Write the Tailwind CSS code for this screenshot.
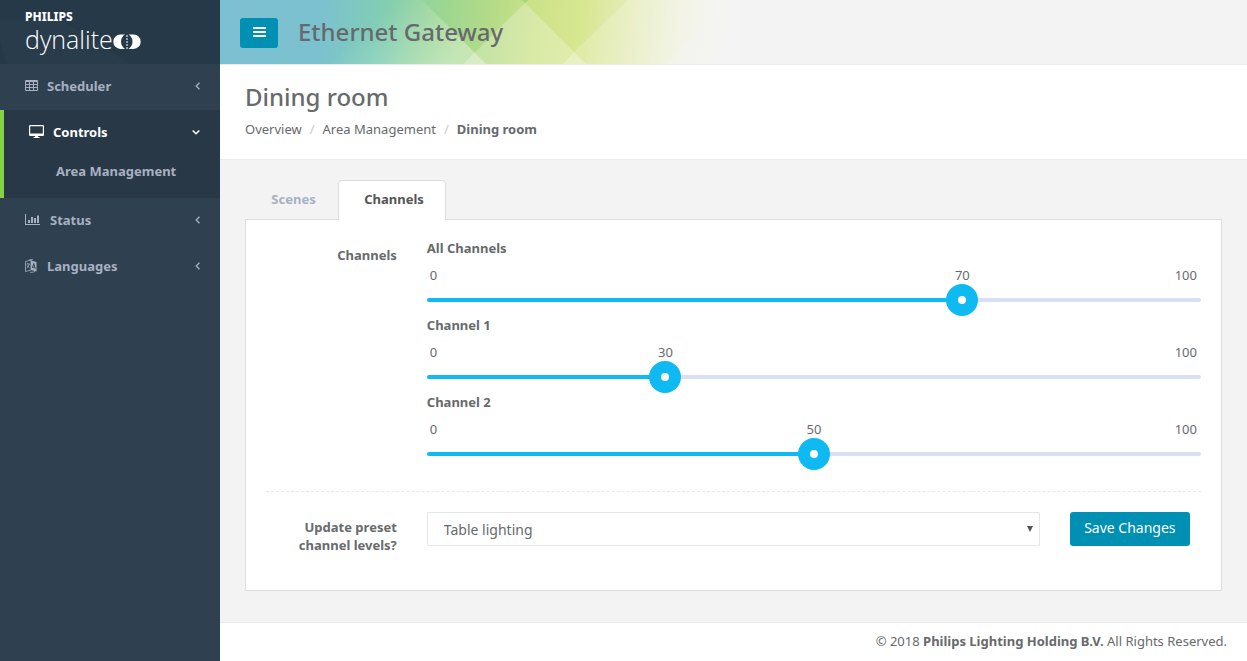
<!DOCTYPE html>
<html lang="en">
<head>
    <meta charset="UTF-8">
    <meta name="viewport" content="width=device-width, initial-scale=1.0">
    <title>Ethernet Gateway - Dining room</title>
    <script src="https://cdn.jsdelivr.net/npm/@tailwindcss/browser@4"></script>
</head>
<body class="flex min-h-screen bg-[#2f4050] font-['Noto_Sans','Open_Sans',sans-serif] text-[13px] leading-[18px] text-[#676a6c]">
    <!-- Sidebar -->
    <aside class="w-[220px] shrink-0 text-[#a7b1c2]">
        <a href="#" aria-label="Philips dynalite" class="block h-16 bg-[#263949]">
            <svg class="block h-16 w-full" viewBox="0 0 220 64" fill="#fff">
                <path d="M0 20L62 20 130 64H7L0 42Z" fill="#293c4c" />
                <text x="25" y="21" font-size="12" font-weight="800" font-family="Noto Sans">PHILIPS</text>
                <text x="25" y="49" font-size="25" font-weight="300" font-family="Open Sans">dynalite</text>
                <path d="M120.500 34.500a7.200 7.200 0 0 0 0 14.400h4.500a8.500 8.500 0 0 1 0-14.400z" />
                <path d="M133.500 34.500a7.200 7.200 0 0 1 0 14.400h-5a8.500 8.500 0 0 0 0-14.400z" />
                <path d="M127 35v14" stroke="#fff" stroke-width="1" stroke-dasharray="2 1" />
            </svg>
        </a>
        <nav class="font-bold">
            <a href="#" class="flex h-[46px] items-center pr-5 pb-[2px] pl-[25px]">
                <svg class="h-[14px] w-[13px]" viewBox="0 0 13 14" fill="none" stroke="currentColor">
                    <path d="M.5 1.500h12v10H.5zM.5 2.500h12M.5 5.500h12M.5 8.500h12M4.500 2.500v9M8.500 2.500v9" />
                </svg>
                <span class="ml-[9px] flex-1">Scheduler</span>
                <svg class="h-2 w-[5px]" viewBox="0 0 5 8" fill="none" stroke="currentColor" stroke-width="1.300"><path d="M4.500.7L1.200 4l3.300 3.300" /></svg>
            </a>
            <div class="border-l-4 border-[#86d144] bg-[#293846] pb-2">
                <a href="#" class="flex h-[44px] items-center pr-5 pl-[25px] text-white">
                    <svg class="h-[14px] w-[15px]" viewBox="0 0 15 14" fill="currentColor">
                        <path fill-rule="evenodd" d="M1.200 0h12.600Q15 0 15 1.200v8.600Q15 11 13.800 11H9v1h1.500v1h-6v-1H6v-1H1.200Q0 11 0 9.800V1.200Q0 0 1.200 0zM1.200 1.200v7.300h12.600V1.200z" />
                    </svg>
                    <span class="ml-[9px] flex-1">Controls</span>
                    <svg class="h-[5px] w-2" viewBox="0 0 8 5" fill="none" stroke="currentColor" stroke-width="1.500"><path d="M.7.5L4 3.800 7.300.5" /></svg>
                </a>
                <a href="#" class="flex h-9 items-center pb-[2px] pl-[52px]">Area Management</a>
            </div>
            <a href="#" class="flex h-[46px] items-center pr-5 pb-[2px] pl-[25px]">
                <svg class="h-[14px] w-[15px]" viewBox="0 0 15 14" fill="currentColor">
                    <path d="M0 1h1v10h14v1H0zM3 7h2v3H3zM6 4h2v6H6zM9 5h2v5H9zM12 2.500h2V10h-2z" />
                </svg>
                <span class="ml-[10px] flex-1">Status</span>
                <svg class="h-2 w-[5px]" viewBox="0 0 5 8" fill="none" stroke="currentColor" stroke-width="1.300"><path d="M4.500.7L1.200 4l3.300 3.300" /></svg>
            </a>
            <a href="#" class="flex h-[46px] items-center pr-5 pb-[2px] pl-[25px]">
                <svg class="h-[14px] w-3" viewBox="0 0 12 14">
                    <path d="M.5 2.500L6 1v10L.5 12.500z" fill="none" stroke="currentColor" stroke-width=".8" />
                    <path d="M6 1.500l5.500 1.500v9.500L6 11z" fill="currentColor" />
                    <path d="M1.500 5h3.200M3 4v1M4.300 5Q3.500 8 1.700 9M2 6.500Q3 8 4.500 8.500" fill="none" stroke="currentColor" stroke-width=".8" />
                    <path d="M7.300 9l1.500-4.500L10.300 10M7.800 8l2 .4" fill="none" stroke="#2f4050" stroke-width=".9" />
                    <path d="M4 1l4-.6M5 13.300q3 .3 5-.8" fill="none" stroke="currentColor" stroke-width=".8" />
                </svg>
                <span class="ml-[10px] flex-1">Languages</span>
                <svg class="h-2 w-[5px]" viewBox="0 0 5 8" fill="none" stroke="currentColor" stroke-width="1.300"><path d="M4.500.7L1.200 4l3.300 3.300" /></svg>
            </a>
        </nav>
    </aside>

    <div class="flex min-w-0 flex-1 flex-col bg-[#f3f3f4]">
        <!-- Top bar -->
        <header class="relative flex h-[65px] items-center border-b border-[#e7eaec] pt-[2px] pl-5">
            <svg class="absolute top-0 left-0 h-16 w-[520px]" viewBox="0 0 520 64" aria-hidden="true">
                <defs>
                    <linearGradient id="band" gradientUnits="userSpaceOnUse" x1="0" y1="0" x2="510" y2="50">
                        <stop offset="0" stop-color="#7cc0d3" />
                        <stop offset=".2" stop-color="#7cc1cf" />
                        <stop offset=".31" stop-color="#80cdb6" />
                        <stop offset=".43" stop-color="#9bd692" />
                        <stop offset=".53" stop-color="#b4db88" />
                        <stop offset=".61" stop-color="#cbe288" />
                        <stop offset=".71" stop-color="#d8e792" />
                        <stop offset=".8" stop-color="#e5ecba" />
                        <stop offset=".9" stop-color="#f0f2e0" />
                        <stop offset="1" stop-color="#f3f3f4" />
                    </linearGradient>
                    <linearGradient id="haze" gradientUnits="userSpaceOnUse" x1="170" y1="5" x2="225" y2="64">
                        <stop offset="0" stop-color="#fff" stop-opacity="0" />
                        <stop offset="1" stop-color="#fff" stop-opacity=".35" />
                    </linearGradient>
                </defs>
                <path d="M0 0h520v64H0z" fill="url(#band)" />
                <path d="M202 0L266 64H110L150 0z" fill="url(#haze)" />
                <path d="M302 0h6l-3 3z" fill="#9bdc72" />
                <path d="M305 3L366 64H243z" fill="#fff" fill-opacity=".25" />
                <path d="M354 52L366 64H343z" fill="#fff" fill-opacity=".25" />
                <path d="M408 0L354 52 366 64H520V0z" fill="#fff" fill-opacity=".2" />
                <path d="M510 0L446 64H520V0z" fill="#f3f3f4" fill-opacity=".5" />
            </svg>
            <button type="button" aria-label="Toggle navigation" class="relative flex h-[30px] w-[38px] items-center justify-center rounded-[3px] bg-[#0090b4] pb-[2px]">
                <svg class="h-3 w-[13px]" viewBox="0 0 13 12" fill="#fff"><path d="M0 1h13v2H0zM0 5h13v2H0zM0 9h13v2H0z" /></svg>
            </button>
            <h2 class="relative ml-5 pb-[2px] text-2xl font-medium">Ethernet Gateway</h2>
        </header>

        <!-- Page heading -->
        <div class="h-[95px] border-b border-[#e7eaec] bg-white px-[25px] pt-4">
            <h1 class="text-2xl font-medium">Dining room</h1>
            <ol class="mt-[7px] flex">
                <li><a href="#">Overview</a></li>
                <li class="before:px-2 before:text-[#ccc] before:content-['/']"><a href="#">Area Management</a></li>
                <li class="font-bold before:px-2 before:font-normal before:text-[#ccc] before:content-['/']">Dining room</li>
            </ol>
        </div>

        <main class="flex-1 px-[25px] py-5">
            <div class="flex font-bold" role="tablist">
                <button type="button" role="tab" class="h-10 w-[93px] pb-[2px] pl-1 text-[#a7b1c2]">Scenes</button>
                <button type="button" role="tab" aria-selected="true" class="relative z-10 -mb-px h-10 w-[108px] rounded-t border border-b-0 border-[#ddd] bg-white pb-1 pl-1 text-[#555]">Channels</button>
            </div>

            <form class="-mt-px border border-[#ddd] bg-white px-5 pt-[19px] pb-[35px]">
                <div class="-mx-[15px] grid grid-cols-12">
                    <div class="col-span-2 px-[15px] pt-[7px] text-right font-bold">Channels</div>
                    <div id="sliders" class="col-span-10 px-[15px]"></div>
                </div>

                <hr class="my-5 border-dashed border-[#e7eaec]">

                <div class="-mx-[15px] grid grid-cols-12">
                    <label for="preset" class="col-span-2 px-[15px] pt-[6px] pb-px text-right font-bold">Update preset channel levels?</label>
                    <div class="relative col-span-8 px-[15px]">
                        <select id="preset" class="h-[34px] w-full appearance-none rounded-[1px] border border-[#e5e6e7] bg-white px-4 pt-[2px] text-sm">
                            <option>Table lighting</option>
                        </select>
                        <svg class="pointer-events-none absolute top-[14px] right-[22px] h-[6px] w-[6px]" viewBox="0 0 6 6" fill="#555"><path d="M0 0h6L3 6z" /></svg>
                    </div>
                    <div class="col-span-2 px-[15px]">
                        <button type="submit" class="h-[34px] rounded-[3px] bg-[#0090b4] px-[14px] pb-[2px] text-sm whitespace-nowrap text-white">Save Changes</button>
                    </div>
                </div>
            </form>
        </main>

        <footer class="border-t border-[#e7eaec] bg-white px-5 pt-[9px] pb-[11px] text-right">
            © 2018 <strong>Philips Lighting Holding B.V.</strong> All Rights Reserved.
        </footer>
    </div>

    <script>
        const channels = [
            { name: 'All Channels', level: 70 },
            { name: 'Channel 1', level: 30 },
            { name: 'Channel 2', level: 50 }
        ];
        const sliders = document.getElementById('sliders');

        // centre of the 32px thumb for a given level
        const thumbPos = (level) => `calc(16px + (100% - 32px) * ${level / 100})`;

        channels.forEach((channel, i) => {
            const row = document.createElement('div');
            row.className = i < channels.length - 1 ? '' : 'pb-px';
            row.innerHTML = `
                <label for="channel${i}" class="block font-bold">${channel.name}</label>
                <div class="relative mt-[9px] flex justify-between pr-1 pl-[3px]">
                    <span>0</span>
                    <output for="channel${i}" class="absolute -translate-x-1/2"></output>
                    <span>100</span>
                </div>
                <div class="relative">
                    <div class="absolute top-[14px] h-1 w-full overflow-hidden rounded-full bg-[#d8e0f3]">
                        <div class="fill h-full bg-[#0fb9f2]"></div>
                    </div>
                    <input type="range" id="channel${i}" min="0" max="100" value="${channel.level}" class="relative block h-8 w-full cursor-pointer appearance-none bg-transparent [&::-webkit-slider-thumb]:h-8 [&::-webkit-slider-thumb]:w-8 [&::-webkit-slider-thumb]:appearance-none [&::-webkit-slider-thumb]:rounded-full [&::-webkit-slider-thumb]:border-12 [&::-webkit-slider-thumb]:border-[#0fb9f2] [&::-webkit-slider-thumb]:bg-white">
                </div>`;
            const input = row.querySelector('input');
            const output = row.querySelector('output');
            const fill = row.querySelector('.fill');
            const update = () => {
                output.textContent = input.value;
                output.style.left = thumbPos(input.value);
                fill.style.width = thumbPos(input.value);
            };
            input.addEventListener('input', update);
            update();
            sliders.appendChild(row);
        });
    </script>
</body>
</html>
